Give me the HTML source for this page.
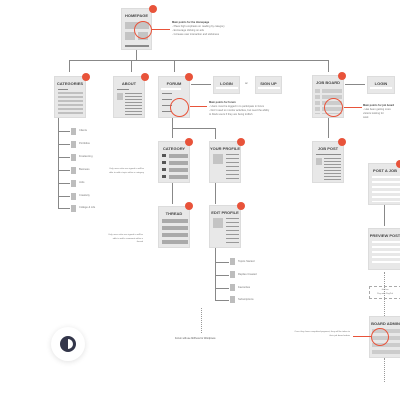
<!DOCTYPE html><html><head><style>
body{margin:0;width:400px;height:400px;background:#fff;position:relative;overflow:hidden;font-family:"Liberation Sans",sans-serif}
div{position:absolute;box-sizing:border-box}
.c{background:#e8e8e8;border:1px solid #dcdcdc}
.t{font-size:4px;font-weight:bold;color:#444;width:100%;text-align:center;top:4px}
.b{width:8px;height:8px;border-radius:50%;background:#e8533a}
.g{background:#c4c4c4}
.d{background:#8a8a8a}
.l{background:#888}
.rc{border:1px solid #e8533a;border-radius:50%}
.rl{background:#e8533a;height:1px}
.s{font-size:2.6px;color:#777;line-height:4px}
.doc{width:5px;height:7px;background:#bdbdbd}
</style></head><body>
<div class="l" style="left:69px;top:60px;width:260px;height:1px"></div>
<div class="l" style="left:136px;top:50px;width:1px;height:10px"></div>
<div class="l" style="left:69px;top:60px;width:1px;height:12px"></div>
<div class="l" style="left:131px;top:60px;width:1px;height:12px"></div>
<div class="l" style="left:174px;top:60px;width:1px;height:12px"></div>
<div class="l" style="left:328px;top:60px;width:1px;height:12px"></div>
<div class="l" style="left:191px;top:84px;width:20px;height:1px"></div>
<div class="l" style="left:345px;top:84px;width:20px;height:1px"></div>
<div class="l" style="left:172px;top:118px;width:1px;height:20px"></div>
<div class="l" style="left:172px;top:128px;width:44px;height:1px"></div>
<div class="l" style="left:215px;top:128px;width:1px;height:11px"></div>
<div class="l" style="left:172px;top:183px;width:1px;height:21px"></div>
<div class="l" style="left:215px;top:183px;width:1px;height:21px"></div>
<div class="l" style="left:328px;top:118px;width:1px;height:20px"></div>
<div class="l" style="left:384px;top:205px;width:1px;height:21px"></div>
<div style="left:384px;top:272px;width:0;height:44px;border-left:1px dotted #999"></div>
<div style="left:384px;top:358px;width:0;height:24px;border-left:1px dotted #999"></div>
<div style="left:201px;top:308px;width:0;height:25px;border-left:1px dotted #999"></div>
<div class="l" style="left:58px;top:118px;width:1px;height:90px"></div>
<div class="l" style="left:215px;top:248px;width:1px;height:52px"></div>
<div class="c" style="left:121px;top:8px;width:31px;height:42px"><div class="t">HOMEPAGE</div>
<div class="g" style="left:3px;top:13px;width:24px;height:7px"></div>
<div class="g" style="left:3px;top:23px;width:10px;height:8px"></div><div class="g" style="left:16px;top:23px;width:10px;height:8px"></div>
<div class="d" style="left:3px;top:36px;width:24px;height:2px"></div></div>
<div class="b" style="left:149px;top:5px"></div>
<div class="rc" style="left:134px;top:21px;width:18px;height:18px"></div>
<div class="rl" style="left:152px;top:29px;width:18px"></div>
<div class="s" style="left:172px;top:21px;width:80px"><b style="color:#444">Main points for the Homepage</b><br>- Place high emphasis on reading by category<br>- Encourage clicking on ads<br>- Increase user interaction and stickiness</div>
<div class="c" style="left:54px;top:76px;width:32px;height:42px"><div class="t">CATEGORIES</div>
<div class="d" style="left:3px;top:12px;width:10px;height:1px"></div>
<div class="g" style="left:3px;top:15px;width:25px;height:22px;background:repeating-linear-gradient(#c0c0c0 0 2px,#e8e8e8 2px 4px)"></div></div>
<div class="b" style="left:82px;top:73px"></div>
<div class="c" style="left:113px;top:76px;width:32px;height:42px"><div class="t">ABOUT</div>
<div class="d" style="left:3px;top:12px;width:12px;height:1px"></div>
<div class="g" style="left:3px;top:16px;width:6px;height:7px"></div>
<div style="left:11px;top:16px;width:17px;height:22px;background:repeating-linear-gradient(#999 0 1px,#e8e8e8 1px 3px)"></div></div>
<div class="b" style="left:141px;top:73px"></div>
<div class="c" style="left:158px;top:76px;width:32px;height:42px"><div class="t">FORUM</div>
<div style="left:2px;top:11px;width:20px;height:2px;background:#fff"></div>
<div style="left:3px;top:16px;width:10px;height:20px;background:repeating-linear-gradient(#888 0 1px,#e8e8e8 1px 6px)"></div></div>
<div class="b" style="left:185px;top:73px"></div>
<div class="rc" style="left:170px;top:98px;width:19px;height:19px"></div>
<div class="rl" style="left:190px;top:106px;width:17px"></div>
<div class="s" style="left:209px;top:101px;width:90px"><b style="color:#444">Main points for forum</b><br>- Users must be logged in to participate in forum<br>- Don't need to monitor activities, but need the ability<br>to block users if they are being trollish</div>
<div class="c" style="left:213px;top:76px;width:27px;height:18px"><div class="t">LOGIN</div><div style="left:2px;top:10px;width:22px;height:2px;background:#fff"></div></div>
<div class="s" style="left:245px;top:82px;font-weight:bold">or</div>
<div class="c" style="left:255px;top:76px;width:27px;height:18px"><div class="t">SIGN UP</div><div style="left:2px;top:10px;width:22px;height:2px;background:#fff"></div></div>
<div class="c" style="left:312px;top:75px;width:32px;height:43px"><div class="t">JOB BOARD</div>
<div style="left:2px;top:13px;width:5px;height:25px;background:repeating-linear-gradient(#ccc 0 4px,#e8e8e8 4px 6px)"></div>
<div style="left:9px;top:13px;width:20px;height:25px;background:repeating-linear-gradient(#ccc 0 4px,#e8e8e8 4px 6px)"></div></div>
<div class="b" style="left:338px;top:72px"></div>
<div class="rc" style="left:324px;top:98px;width:19px;height:19px"></div>
<div class="rl" style="left:344px;top:107px;width:18px"></div>
<div class="s" style="left:363px;top:104px;width:40px"><b style="color:#444">Main points for job board</b><br>- Has been getting more<br>visitors looking for<br>work</div>
<div class="c" style="left:367px;top:76px;width:28px;height:18px"><div class="t">LOGIN</div><div style="left:2px;top:10px;width:22px;height:2px;background:#fff"></div></div>
<div class="c" style="left:158px;top:141px;width:32px;height:42px"><div class="t">CATEGORY</div>
<div style="left:10px;top:12px;width:19px;height:27px;background:repeating-linear-gradient(#aaa 0 4px,#e8e8e8 4px 7px)"></div>
<div style="left:3px;top:12px;width:4px;height:27px;background:repeating-linear-gradient(#555 0 3px,#e8e8e8 3px 7px)"></div></div>
<div class="b" style="left:185px;top:138px"></div>
<div class="s" style="left:108px;top:168px;width:36px;text-align:right;font-size:2.2px;line-height:3.5px">Only users who are signed in will be able to add a topic within a category</div>
<div class="c" style="left:209px;top:141px;width:32px;height:42px"><div class="t">YOUR PROFILE</div>
<div class="g" style="left:3px;top:12px;width:10px;height:10px"></div>
<div style="left:16px;top:12px;width:13px;height:26px;background:repeating-linear-gradient(#999 0 1px,#e8e8e8 1px 4px)"></div></div>
<div class="b" style="left:237px;top:138px"></div>
<div class="c" style="left:312px;top:141px;width:32px;height:42px"><div class="t">JOB POST</div>
<div class="d" style="left:3px;top:12px;width:25px;height:1px"></div>
<div class="g" style="left:3px;top:16px;width:6px;height:7px"></div>
<div style="left:11px;top:16px;width:17px;height:22px;background:repeating-linear-gradient(#999 0 1px,#e8e8e8 1px 3px)"></div></div>
<div class="b" style="left:338px;top:138px"></div>
<div class="c" style="left:368px;top:163px;width:34px;height:42px"><div class="t">POST A JOB</div>
<div style="left:3px;top:12px;width:30px;height:26px;background:repeating-linear-gradient(#fff 0 2px,#e8e8e8 2px 5px)"></div></div>
<div class="b" style="left:396px;top:160px"></div>
<div class="c" style="left:158px;top:206px;width:32px;height:42px"><div class="t">THREAD</div>
<div style="left:3px;top:12px;width:26px;height:26px;background:repeating-linear-gradient(#aaa 0 4px,#e8e8e8 4px 7px)"></div></div>
<div class="b" style="left:185px;top:202px"></div>
<div class="s" style="left:107px;top:234px;width:36px;text-align:right;font-size:2.2px;line-height:3.5px">Only users who are signed in will be able to add a comment within a thread</div>
<div class="c" style="left:209px;top:205px;width:32px;height:43px"><div class="t">EDIT PROFILE</div>
<div class="g" style="left:3px;top:12px;width:10px;height:10px"></div>
<div style="left:16px;top:12px;width:13px;height:26px;background:repeating-linear-gradient(#999 0 1px,#e8e8e8 1px 4px)"></div></div>
<div class="b" style="left:237px;top:202px"></div>
<div class="c" style="left:368px;top:228px;width:34px;height:42px"><div class="t">PREVIEW POST</div>
<div style="left:3px;top:12px;width:30px;height:22px;background:repeating-linear-gradient(#fff 0 2px,#e8e8e8 2px 5px)"></div></div>
<div style="left:369px;top:286px;width:33px;height:13px;border:1px dashed #aaa"></div>
<div class="s" style="left:370px;top:288px;width:30px;text-align:center;font-size:2.2px">Job fee<br>Pay with PayPal</div>
<div class="c" style="left:369px;top:316px;width:33px;height:42px"><div class="t">BOARD ADMIN</div>
<div style="left:2px;top:12px;width:30px;height:26px;background:repeating-linear-gradient(#ccc 0 4px,#e8e8e8 4px 7px)"></div></div>
<div class="rc" style="left:371px;top:328px;width:18px;height:18px"></div>
<div class="rl" style="left:353px;top:336px;width:18px"></div>
<div class="s" style="left:290px;top:331px;width:60px;text-align:right;font-size:2.2px;line-height:3.5px">Once they have completed payment, they will be taken to their job board admin</div>
<div class="s" style="left:175px;top:337px;width:60px;font-size:2.4px;color:#555">Forum will use bbPress for Wordpress</div>
<div class="l" style="left:58px;top:131px;width:12px;height:1px"></div><div class="doc" style="left:71px;top:128px"></div><div class="s" style="left:79px;top:129px">Clients</div>
<div class="l" style="left:58px;top:144px;width:12px;height:1px"></div><div class="doc" style="left:71px;top:141px"></div><div class="s" style="left:79px;top:142px">Portfolios</div>
<div class="l" style="left:58px;top:157px;width:12px;height:1px"></div><div class="doc" style="left:71px;top:154px"></div><div class="s" style="left:79px;top:155px">Freelancing</div>
<div class="l" style="left:58px;top:170px;width:12px;height:1px"></div><div class="doc" style="left:71px;top:167px"></div><div class="s" style="left:79px;top:168px">Business</div>
<div class="l" style="left:58px;top:183px;width:12px;height:1px"></div><div class="doc" style="left:71px;top:180px"></div><div class="s" style="left:79px;top:181px">Jobs</div>
<div class="l" style="left:58px;top:196px;width:12px;height:1px"></div><div class="doc" style="left:71px;top:193px"></div><div class="s" style="left:79px;top:194px">Creativity</div>
<div class="l" style="left:58px;top:208px;width:12px;height:1px"></div><div class="doc" style="left:71px;top:205px"></div><div class="s" style="left:79px;top:206px">College &amp; Life</div>
<div class="l" style="left:215px;top:262px;width:14px;height:1px"></div><div class="doc" style="left:230px;top:258px"></div><div class="s" style="left:238px;top:260px">Topics Started</div>
<div class="l" style="left:215px;top:275px;width:14px;height:1px"></div><div class="doc" style="left:230px;top:271px"></div><div class="s" style="left:238px;top:273px">Replies Created</div>
<div class="l" style="left:215px;top:288px;width:14px;height:1px"></div><div class="doc" style="left:230px;top:284px"></div><div class="s" style="left:238px;top:286px">Favourites</div>
<div class="l" style="left:215px;top:300px;width:14px;height:1px"></div><div class="doc" style="left:230px;top:296px"></div><div class="s" style="left:238px;top:298px">Subscriptions</div>
<div style="left:51px;top:327px;width:34px;height:34px;border-radius:50%;background:#fff;box-shadow:0 1px 6px rgba(0,0,0,.12)"></div>
<div style="left:60px;top:336px;width:16px;height:16px;border-radius:50%;background:#33364a"></div>
<div style="left:68px;top:339px;width:5px;height:10px;border-radius:0 5px 5px 0;background:#fff"></div>
</body></html>
